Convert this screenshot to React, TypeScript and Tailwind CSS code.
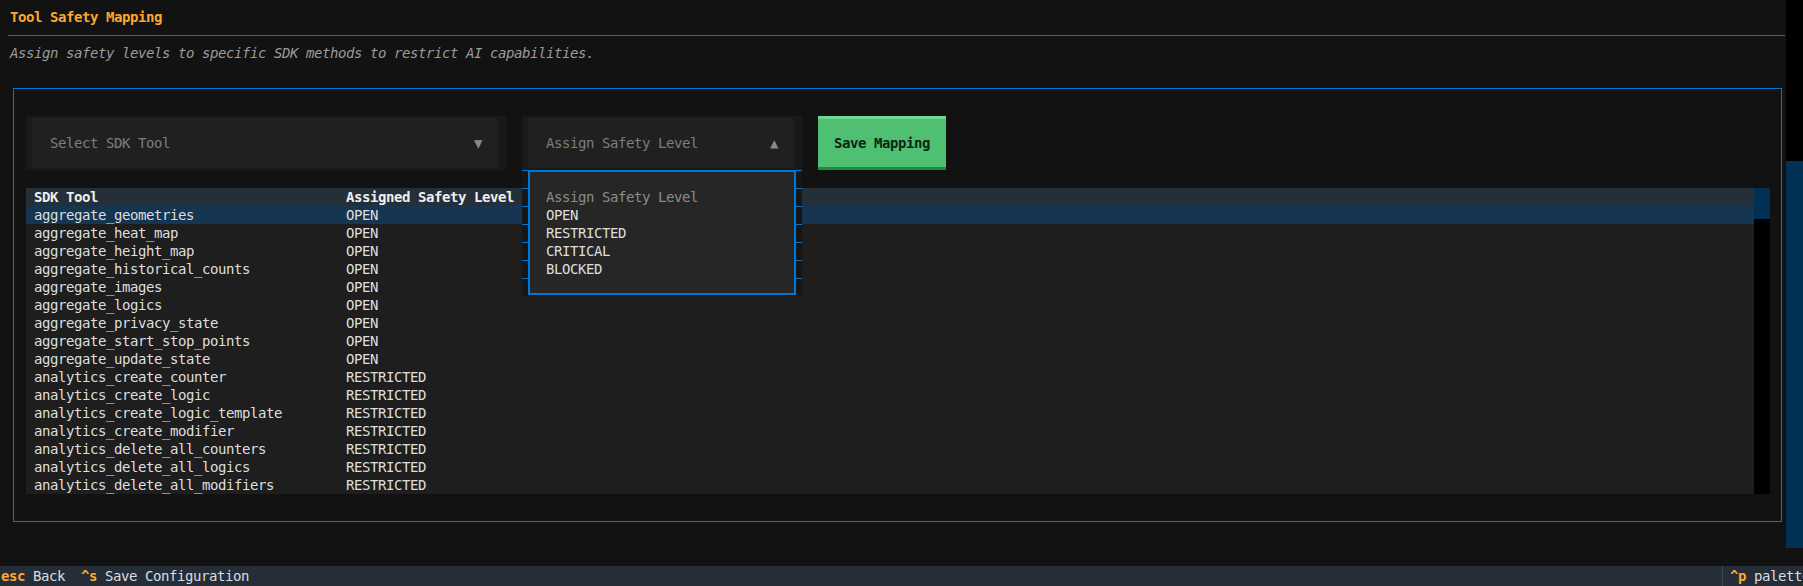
const rows: [string, string][] = [
  ["aggregate_geometries", "OPEN"],
  ["aggregate_heat_map", "OPEN"],
  ["aggregate_height_map", "OPEN"],
  ["aggregate_historical_counts", "OPEN"],
  ["aggregate_images", "OPEN"],
  ["aggregate_logics", "OPEN"],
  ["aggregate_privacy_state", "OPEN"],
  ["aggregate_start_stop_points", "OPEN"],
  ["aggregate_update_state", "OPEN"],
  ["analytics_create_counter", "RESTRICTED"],
  ["analytics_create_logic", "RESTRICTED"],
  ["analytics_create_logic_template", "RESTRICTED"],
  ["analytics_create_modifier", "RESTRICTED"],
  ["analytics_delete_all_counters", "RESTRICTED"],
  ["analytics_delete_all_logics", "RESTRICTED"],
  ["analytics_delete_all_modifiers", "RESTRICTED"],
];

const levels = ["OPEN", "RESTRICTED", "CRITICAL", "BLOCKED"];

// little blue marks the terminal leaves beside the tall border
function Ticks() {
  return (
    <div className="w-[6px] flex flex-col">
      {Array(7)
        .fill(0)
        .map((_, i) => (
          <div key={i} className="h-[18px] border-t border-[#0178d4]" />
        ))}
    </div>
  );
}

function SelectBox({
  label,
  arrow,
  width,
}: {
  label: string;
  arrow: string;
  width: string;
}) {
  return (
    <div className={`${width} h-[54px] bg-[#191919] pl-[6px] pr-[8px] py-[2px]`}>
      <div className="h-full bg-[#202020] flex items-center justify-between pl-[18px] pr-[16px] text-[#7d7d7d]">
        <span>{label}</span>
        <span className="text-[14px] text-[#8a8a8a]">{arrow}</span>
      </div>
    </div>
  );
}

export default function App() {
  return (
    <div className="w-[1803px] h-[586px] bg-[#121212] overflow-hidden flex flex-col font-['DejaVu_Sans_Mono',monospace] text-[14px] tracking-[-0.43px] text-[#dedede]">
      <div className="flex h-[566px]">
        <div className="w-[1786px] flex flex-col">
          <div className="ml-[8px] w-[1777px]">
            <div className="pt-[8px] pl-[2px] h-[26px] leading-[18px] font-bold text-[#ffa62b]">
              Tool Safety Mapping
            </div>
            <div className="mt-[9px] h-px bg-[#0178d4]" />
            <div className="mt-[8px] pl-[2px] h-[18px] leading-[18px] italic text-[#9a9a9a]">
              Assign safety levels to specific SDK methods to restrict AI capabilities.
            </div>
          </div>

          <div className="mt-[26px] ml-[13px] w-[1769px] h-[434px] border border-[#0178d4] pt-[27px] pl-[12px]">
            <div className="flex items-start gap-[16px] h-[54px]">
              <SelectBox label="Select SDK Tool" arrow="▼" width="w-[480px]" />
              <div className="relative w-[280px]">
                <SelectBox label="Assign Safety Level" arrow="▲" width="w-[280px]" />
                <div className="absolute top-[54px] left-0 w-[280px] h-[126px] bg-[#161616] flex z-10">
                  <Ticks />
                  <div className="w-[268px] h-[125px] border-2 border-[#0178d4] bg-[#262626] pt-[16px] pl-[16px] leading-[18px]">
                    <div className="text-[#8c8c8c]">Assign Safety Level</div>
                    {levels.map((l) => (
                      <div key={l}>{l}</div>
                    ))}
                  </div>
                  <Ticks />
                </div>
              </div>
              <button className="w-[128px] h-[54px] bg-[#4fbf71] border-t-[3px] border-t-[#6fd78f] border-b-[3px] border-b-[#1c8b44] text-[#0f2416] font-bold flex items-center justify-center">
                Save Mapping
              </button>
            </div>

            <div className="mt-[18px] w-[1744px] h-[306px] flex">
              <div className="w-[1728px] bg-[#1e1e1e] flex flex-col leading-[18px]">
                <div className="h-[18px] bg-[#252f38] flex font-bold text-[#eeeeee]">
                  <div className="w-[312px] pl-[8px]">SDK Tool</div>
                  <div className="w-[184px] pl-[8px]">Assigned Safety Level</div>
                </div>
                {rows.map(([tool, level], i) => (
                  <div
                    key={tool}
                    className={`h-[18px] flex ${i === 0 ? "bg-[#163550]" : ""}`}
                  >
                    <div className="w-[312px] pl-[8px]">{tool}</div>
                    <div className="w-[184px] pl-[8px]">{level}</div>
                  </div>
                ))}
              </div>
              <div className="w-[16px] flex flex-col">
                <div className="h-[31px] bg-[#003054]" />
                <div className="flex-1 bg-black" />
              </div>
            </div>
          </div>
        </div>

        <div className="w-[17px] flex flex-col">
          <div className="h-[161px] bg-black" />
          <div className="h-[387px] bg-[#003054]" />
        </div>
      </div>

      <div className="h-[20px] bg-[#252e37] flex justify-between leading-[20px] whitespace-pre">
        <div className="pl-[1px] text-[#d8dde2]">
          <span className="font-bold text-[#ffa62b]">esc</span> Back{"  "}
          <span className="font-bold text-[#ffa62b]">^s</span> Save Configuration
        </div>
        <div className="w-[81px] overflow-hidden border-l border-[#3e4853] pl-[7px] text-[#d8dde2]">
          <span className="font-bold text-[#ffa62b]">^p</span> palette
        </div>
      </div>
    </div>
  );
}
